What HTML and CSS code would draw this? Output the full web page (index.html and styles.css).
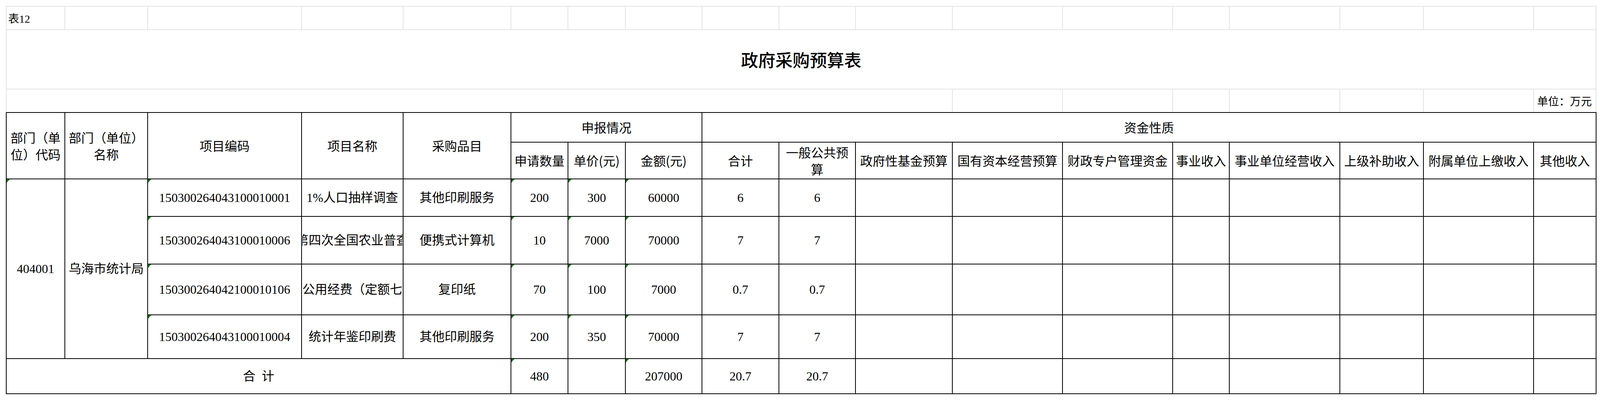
FILE: index.html
```html
<!DOCTYPE html>
<html lang="zh-CN">
<head>
<meta charset="utf-8">
<title>政府采购预算表</title>
<link rel="stylesheet" href="styles.css">
</head>
<body>
<div class="sheet">
  <table class="grid top">
    <colgroup>
      <col class="c1"><col class="c2"><col class="c3"><col class="c4"><col class="c5"><col class="c6"><col class="c7"><col class="c8"><col class="c9"><col class="c10"><col class="c11"><col class="c12"><col class="c13"><col class="c14"><col class="c15"><col class="c16"><col class="c17"><col class="c18">
    </colgroup>
    <tbody>
      <tr class="r-label">
        <td class="label">表12</td><td></td><td></td><td></td><td></td><td></td><td></td><td></td><td></td><td></td><td></td><td></td><td></td><td></td><td></td><td></td><td></td><td></td>
      </tr>
      <tr class="r-title">
        <td class="title" colspan="18">政府采购预算表</td>
      </tr>
      <tr class="r-unit">
        <td colspan="11"></td><td></td><td></td><td></td><td></td><td></td><td></td><td class="unit">单位：万元</td>
      </tr>
    </tbody>
  </table>
  <table class="grid budget">
    <colgroup>
      <col class="c1"><col class="c2"><col class="c3"><col class="c4"><col class="c5"><col class="c6"><col class="c7"><col class="c8"><col class="c9"><col class="c10"><col class="c11"><col class="c12"><col class="c13"><col class="c14"><col class="c15"><col class="c16"><col class="c17"><col class="c18">
    </colgroup>
    <thead>
      <tr class="h1">
        <th rowspan="2">部门（单位）代码</th>
        <th rowspan="2">部门（单位）名称</th>
        <th rowspan="2">项目编码</th>
        <th rowspan="2">项目名称</th>
        <th rowspan="2">采购品目</th>
        <th colspan="3">申报情况</th>
        <th colspan="10">资金性质</th>
      </tr>
      <tr class="h2">
        <th>申请数量</th>
        <th>单价(元)</th>
        <th>金额(元)</th>
        <th>合计</th>
        <th>一般公共预算</th>
        <th>政府性基金预算</th>
        <th>国有资本经营预算</th>
        <th>财政专户管理资金</th>
        <th>事业收入</th>
        <th>事业单位经营收入</th>
        <th>上级补助收入</th>
        <th>附属单位上缴收入</th>
        <th>其他收入</th>
      </tr>
    </thead>
    <tbody>
      <tr class="d1">
        <td class="flag" rowspan="4">404001</td>
        <td rowspan="4">乌海市统计局</td>
        <td class="flag">150300264043100010001</td>
        <td class="name"><div class="clip">1%人口抽样调查</div></td>
        <td>其他印刷服务</td>
        <td class="flag">200</td>
        <td class="flag">300</td>
        <td class="flag">60000</td>
        <td>6</td>
        <td>6</td>
        <td></td><td></td><td></td><td></td><td></td><td></td><td></td><td></td>
      </tr>
      <tr class="d2">
        <td class="flag">150300264043100010006</td>
        <td class="name"><div class="clip">第四次全国农业普查</div></td>
        <td>便携式计算机</td>
        <td class="flag">10</td>
        <td class="flag">7000</td>
        <td class="flag">70000</td>
        <td>7</td>
        <td>7</td>
        <td></td><td></td><td></td><td></td><td></td><td></td><td></td><td></td>
      </tr>
      <tr class="d3">
        <td class="flag">150300264042100010106</td>
        <td class="name"><div class="clip start">公用经费（定额七</div></td>
        <td>复印纸</td>
        <td class="flag">70</td>
        <td class="flag">100</td>
        <td class="flag">7000</td>
        <td>0.7</td>
        <td>0.7</td>
        <td></td><td></td><td></td><td></td><td></td><td></td><td></td><td></td>
      </tr>
      <tr class="d4">
        <td class="flag">150300264043100010004</td>
        <td class="name"><div class="clip">统计年鉴印刷费</div></td>
        <td>其他印刷服务</td>
        <td class="flag">200</td>
        <td class="flag">350</td>
        <td class="flag">70000</td>
        <td>7</td>
        <td>7</td>
        <td></td><td></td><td></td><td></td><td></td><td></td><td></td><td></td>
      </tr>
    </tbody>
    <tfoot>
      <tr class="total">
        <td class="sum-label" colspan="5">合 计</td>
        <td class="flag">480</td>
        <td></td>
        <td class="flag">207000</td>
        <td>20.7</td>
        <td>20.7</td>
        <td></td><td></td><td></td><td></td><td></td><td></td><td></td><td></td>
      </tr>
    </tfoot>
  </table>
</div>
</body>
</html>
```

FILE: styles.css
```css
* {
  box-sizing: border-box;
}

html,
body {
  margin: 0;
  background: #ffffff;
}

body {
  width: 4102px;
  height: 1024px;
  overflow: hidden;
  color: #000000;
}

.sheet {
  padding: 15px 0 0 15px;
}

.grid {
  border-collapse: collapse;
  table-layout: fixed;
  width: 4072px;
}

.c1 { width: 150px; }
.c2 { width: 212px; }
.c3 { width: 394px; }
.c4 { width: 260px; }
.c5 { width: 276px; }
.c6 { width: 146px; }
.c7 { width: 147px; }
.c8 { width: 196px; }
.c9 { width: 197px; }
.c10 { width: 196px; }
.c11 { width: 248px; }
.c12 { width: 282px; }
.c13 { width: 282px; }
.c14 { width: 145px; }
.c15 { width: 283px; }
.c16 { width: 214px; }
.c17 { width: 282px; }
.c18 { width: 160px; }

.grid td,
.grid th {
  padding: 0 4px;
  overflow: hidden;
  white-space: nowrap;
  text-align: center;
  vertical-align: middle;
}

/* spreadsheet rows above the table */
.top td {
  border: 2px solid #e3e3e3;
  font-family: "Liberation Serif", "Noto Sans CJK SC", serif;
  font-size: 28px;
}

.r-label { height: 60px; }
.r-title { height: 152px; }
.r-unit { height: 59px; }

.r-unit td {
  border-bottom: none;
}

.top .label {
  text-align: left;
  padding-left: 4px;
}

.top .title {
  font-family: "Noto Sans CJK SC", sans-serif;
  font-size: 44px;
  font-weight: 500;
}

.top .unit {
  text-align: right;
  padding-right: 10px;
}

/* budget table */
.budget th,
.budget td {
  border: 2px solid #000000;
}

.budget th {
  font-family: "Noto Sans CJK SC", sans-serif;
  font-size: 32px;
  font-weight: 400;
  white-space: normal;
  line-height: 1.35;
}

.budget td {
  font-family: "Liberation Serif", "Noto Sans CJK SC", serif;
  font-size: 32px;
  line-height: 1.2;
}

.budget td.name {
  padding: 0 1px;
}

.h1 { height: 76px; }
.h2 { height: 94px; }
.d1 { height: 96px; }
.d2 { height: 122px; }
.d3 { height: 130px; }
.d4 { height: 112px; }
.total { height: 90px; }

.clip {
  display: flex;
  justify-content: center;
  overflow: hidden;
  white-space: nowrap;
}

.clip.start {
  justify-content: flex-start;
}

.budget td.flag {
  position: relative;
}

.budget td.flag::before {
  content: "";
  position: absolute;
  top: 0;
  left: 0;
  width: 0;
  height: 0;
  border-top: 9px solid #1f7a1f;
  border-right: 8px solid transparent;
}

.sum-label {
  word-spacing: 8px;
}
```
